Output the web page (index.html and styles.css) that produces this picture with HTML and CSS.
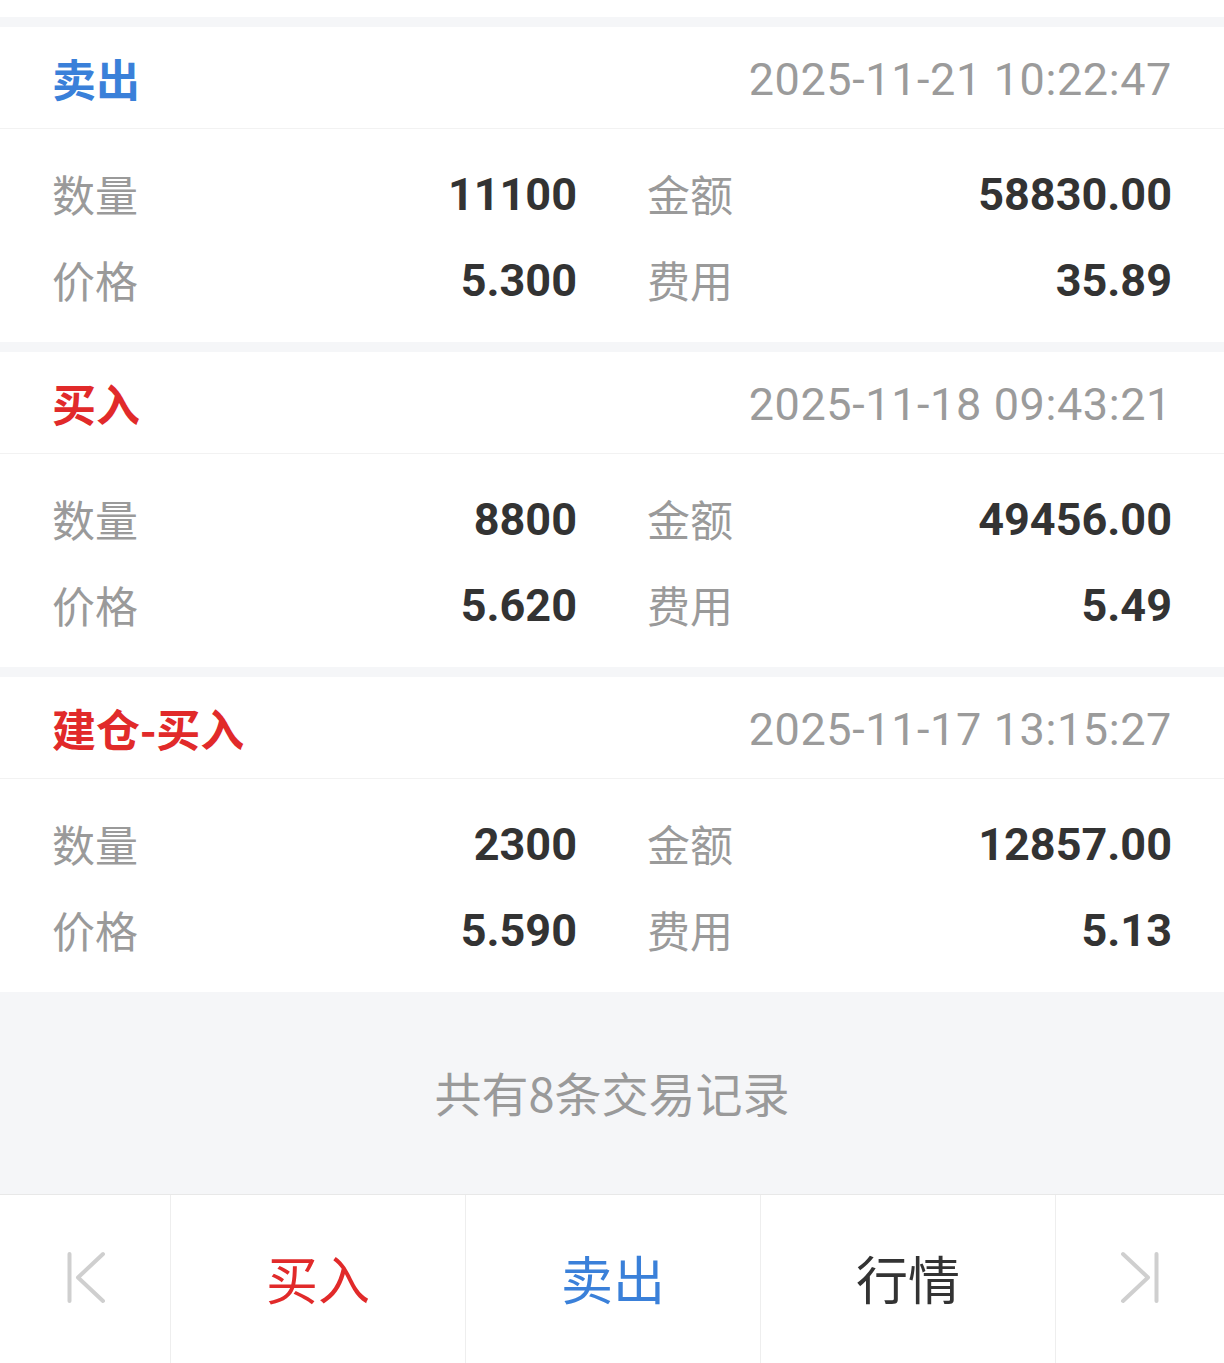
FILE: index.html
```html
<!DOCTYPE html>
<html lang="zh-CN">
<head>
<meta charset="utf-8">
<title>交易记录</title>
<link rel="stylesheet" href="styles.css">
</head>
<body>
<div class="page">
  <div class="top-stub"></div>

  <div class="records">
    <section class="card">
      <div class="card-head">
        <span class="kind sell">卖出</span>
        <span class="time">2025-11-21 10:22:47</span>
      </div>
      <div class="card-body">
        <div class="cell"><span class="label">数量</span><span class="value">11100</span></div>
        <div class="cell"><span class="label">金额</span><span class="value">58830.00</span></div>
        <div class="cell"><span class="label">价格</span><span class="value">5.300</span></div>
        <div class="cell"><span class="label">费用</span><span class="value">35.89</span></div>
      </div>
    </section>

    <section class="card">
      <div class="card-head">
        <span class="kind buy">买入</span>
        <span class="time">2025-11-18 09:43:21</span>
      </div>
      <div class="card-body">
        <div class="cell"><span class="label">数量</span><span class="value">8800</span></div>
        <div class="cell"><span class="label">金额</span><span class="value">49456.00</span></div>
        <div class="cell"><span class="label">价格</span><span class="value">5.620</span></div>
        <div class="cell"><span class="label">费用</span><span class="value">5.49</span></div>
      </div>
    </section>

    <section class="card">
      <div class="card-head">
        <span class="kind buy">建仓-买入</span>
        <span class="time">2025-11-17 13:15:27</span>
      </div>
      <div class="card-body">
        <div class="cell"><span class="label">数量</span><span class="value">2300</span></div>
        <div class="cell"><span class="label">金额</span><span class="value">12857.00</span></div>
        <div class="cell"><span class="label">价格</span><span class="value">5.590</span></div>
        <div class="cell"><span class="label">费用</span><span class="value">5.13</span></div>
      </div>
    </section>
  </div>

  <div class="summary">共有8条交易记录</div>

  <nav class="toolbar">
    <div class="tool">
      <svg class="nav-icon" width="42" height="56" viewBox="0 0 42 56">
        <path d="M5.5 5V52" />
        <path d="M39 5L14 28.5L39 52" />
      </svg>
    </div>
    <div class="tool buy-btn">买入</div>
    <div class="tool sell-btn">卖出</div>
    <div class="tool quote-btn">行情</div>
    <div class="tool">
      <svg class="nav-icon" width="42" height="56" viewBox="0 0 42 56">
        <path d="M4 5L29 28.5L4 52" />
        <path d="M37.5 5V52" />
      </svg>
    </div>
  </nav>
</div>
</body>
</html>
```

FILE: styles.css
```css
* {
  box-sizing: border-box;
}

html, body {
  margin: 0;
  padding: 0;
  background: #ffffff;
}

body {
  font-family: Roboto, "Noto Sans CJK SC", "Noto Sans", sans-serif;
}

.page {
  width: 1224px;
  height: 1363px;
  overflow: hidden;
  background: #f5f6f8;
  display: flex;
  flex-direction: column;
}

.top-stub {
  height: 17px;
  background: #ffffff;
  flex: none;
}

.records {
  padding-top: 10px;
  display: flex;
  flex-direction: column;
  gap: 10px;
  flex: none;
}

.card {
  background: #ffffff;
}

.card-head {
  height: 102px;
  padding: 0 52px 0 52px;
  display: flex;
  align-items: center;
  justify-content: space-between;
  border-bottom: 1px solid #f2f2f2;
}

.kind {
  font-family: "Noto Sans CJK SC", sans-serif;
  font-size: 44px;
  font-weight: 700;
}

.kind.sell {
  color: #3a80d9;
}

.kind.buy {
  color: #e12a2a;
}

.time {
  font-family: Roboto, sans-serif;
  font-size: 45px;
  color: #9b9b9b;
  letter-spacing: 0.6px;
  padding-top: 3px;
}

.card-body {
  padding: 21px 52px 20px 52px;
  display: grid;
  grid-template-columns: 525px 525px;
  column-gap: 70px;
  grid-auto-rows: 86px;
}

.cell {
  display: flex;
  align-items: center;
  justify-content: space-between;
}

.label {
  font-family: "Noto Sans CJK SC", sans-serif;
  font-size: 43px;
  color: #9a9a9a;
}

.value {
  font-family: Roboto, sans-serif;
  font-size: 45px;
  font-weight: 700;
  color: #333333;
  padding-top: 3px;
}

.summary {
  height: 203px;
  display: flex;
  align-items: center;
  justify-content: center;
  font-family: "Noto Sans CJK SC", sans-serif;
  font-size: 47px;
  color: #9a9a9a;
  border-bottom: 1px solid #e8e8e8;
  padding-bottom: 4px;
  flex: none;
}

.toolbar {
  height: 168px;
  background: #ffffff;
  display: grid;
  grid-template-columns: 170px 295px 295px 295px 1fr;
  flex: none;
}

.tool {
  display: flex;
  align-items: center;
  justify-content: center;
  font-family: "Noto Sans CJK SC", sans-serif;
  font-size: 52px;
  padding-bottom: 4px;
}

.tool + .tool {
  border-left: 1px solid #eeeeee;
}

.buy-btn {
  color: #e12a2a;
}

.sell-btn {
  color: #3a80d9;
}

.quote-btn {
  color: #333333;
}

.nav-icon {
  fill: none;
  stroke: #cfcfcf;
  stroke-width: 4;
  stroke-linecap: round;
  stroke-linejoin: round;
}
```
